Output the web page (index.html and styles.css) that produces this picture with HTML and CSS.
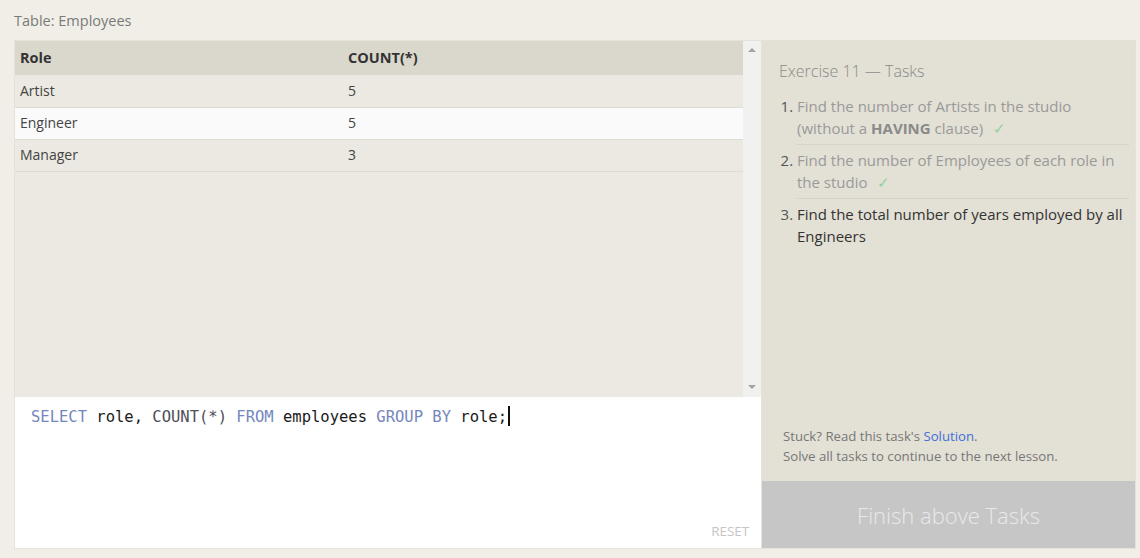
FILE: index.html
```html
<!DOCTYPE html>
<html>
<head>
<meta charset="utf-8">
<link rel="stylesheet" href="styles.css">
</head>
<body>
<div class="title">Table: Employees</div>
<div class="card">
  <div class="left">
    <div class="results">
      <div class="table-wrap">
        <table class="grid">
          <thead>
            <tr><th class="c1">Role</th><th>COUNT(*)</th></tr>
          </thead>
          <tbody>
            <tr><td>Artist</td><td>5</td></tr>
            <tr class="hl"><td>Engineer</td><td>5</td></tr>
            <tr><td>Manager</td><td>3</td></tr>
          </tbody>
        </table>
      </div>
      <div class="scrollbar">
        <span class="arrow up"></span>
        <span class="arrow down"></span>
      </div>
    </div>
    <div class="editor">
      <div class="code"><span class="kw">SELECT</span> role, <span class="fn">COUNT(*)</span> <span class="kw">FROM</span> employees <span class="kw">GROUP BY</span> role;<span class="cursor"></span></div>
      <div class="reset">RESET</div>
    </div>
  </div>
  <div class="right">
    <div class="tasks">
      <div class="tasks-top">
        <div class="tasks-title">Exercise 11 — Tasks</div>
        <ol class="task-list">
          <li class="done">Find the number of Artists in the studio (without a <b>HAVING</b> clause) <span class="check">✓</span></li>
          <li class="done">Find the number of Employees of each role in the studio <span class="check">✓</span></li>
          <li class="todo">Find the total number of years employed by all Engineers</li>
        </ol>
      </div>
      <div class="help">
        <div>Stuck? Read this task's <span class="link">Solution</span>.</div>
        <div>Solve all tasks to continue to the next lesson.</div>
      </div>
    </div>
    <div class="finish">Finish above Tasks</div>
  </div>
</div>
</body>
</html>
```

FILE: styles.css
```css
* { box-sizing: border-box; }
html, body { margin: 0; padding: 0; }
body {
  background: #f0eee7;
  font-family: "Open Sans", "Noto Sans", sans-serif;
  width: 1140px;
  height: 558px;
  overflow: hidden;
}
.title {
  padding: 11px 0 0 14px;
  height: 40px;
  font-size: 14.5px;
  color: #7a7a7a;
}
.card {
  margin-left: 14px;
  width: 1122px;
  height: 509px;
  border: 1px solid #e4e2d9;
  display: flex;
}
.left {
  width: 747px;
  display: flex;
  flex-direction: column;
  border-right: 1px solid #e4e2d9;
}
.results {
  height: 356px;
  display: flex;
  background: #ebe9e1;
}
.table-wrap { flex: 1; }
.grid {
  width: 100%;
  border-collapse: collapse;
  font-size: 14px;
  color: #444;
}
.grid th {
  background: #dad8cc;
  text-align: left;
  font-weight: 700;
  font-size: 14.5px;
  color: #333;
  height: 34px;
  padding: 0 5px 2px;
}
.grid th.c1 { width: 328px; }
.grid td {
  height: 32px;
  padding: 0 5px 1px;
  border-bottom: 1px solid #dddbd2;
}
.grid tr.hl td { background: #fafafa; }
.scrollbar {
  width: 18px;
  background: #f1f1f0;
  display: flex;
  flex-direction: column;
  justify-content: space-between;
  align-items: center;
  padding: 7px 0 8px;
}
.arrow {
  width: 0; height: 0;
  border-left: 4px solid transparent;
  border-right: 4px solid transparent;
}
.arrow.up { border-bottom: 4px solid #a3a3a3; }
.arrow.down { border-top: 4px solid #a3a3a3; }
.editor {
  flex: 1;
  background: #ffffff;
  display: flex;
  flex-direction: column;
  padding: 9px 12px 8px 16px;
}
.code {
  font-family: "DejaVu Sans Mono", "Liberation Mono", monospace;
  font-size: 15.5px;
  line-height: 22px;
  color: #1a1a1a;
}
.code .kw { color: #7487bd; }
.code .fn { color: #4e4e56; }
.cursor {
  display: inline-block;
  width: 2px;
  height: 20px;
  background: #111;
  vertical-align: -4px;
  margin-left: 1px;
}
.reset {
  margin-top: auto;
  align-self: flex-end;
  font-size: 13.5px;
  color: #c6c6c6;
  letter-spacing: -0.1px;
}
.right {
  flex: 1;
  display: flex;
  flex-direction: column;
}
.tasks {
  flex: 1;
  background: #e3e0d5;
  padding: 19px 6px 15px 17px;
  display: flex;
  flex-direction: column;
  justify-content: space-between;
}
.tasks-title {
  font-size: 16px;
  color: #8a8a8a;
  font-weight: 300;
  margin-bottom: 9px;
}
.task-list {
  margin: 0;
  padding-left: 18px;
  font-size: 15px;
  line-height: 22px;
}
.task-list li {
  padding: 4px 0 5px;
  border-bottom: 1px solid #d6d3c8;
}
.task-list li::marker { color: #555; }
.task-list li:last-child { border-bottom: none; }
.task-list li.done { color: #9a9a9a; }
.task-list li.done b { color: #8a8a8a; }
.task-list li.todo { color: #333; }
.task-list .check {
  color: #8ed39b;
  margin-left: 6px;
}
.help {
  font-size: 13.2px;
  line-height: 20px;
  color: #777;
  padding-left: 4px;
}
.link { color: #3f6fd8; }
.finish {
  height: 67px;
  background: #c6c6c6;
  color: #e9e9e9;
  font-size: 22px;
  font-weight: 300;
  display: flex;
  align-items: center;
  justify-content: center;
}
```
